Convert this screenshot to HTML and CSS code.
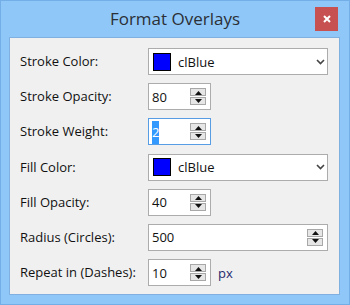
FILE: index.html
```html
<!DOCTYPE html>
<html lang="en">
<head>
    <meta charset="UTF-8">
    <title>Format Overlays</title>
    <link rel="stylesheet" href="styles.css">
</head>
<body>

    <div class="window">
        <div class="titlebar">
            <span></span>
            <h1 class="title">Format Overlays</h1>
            <button class="close">
                <svg width="8" height="8" viewBox="0 0 8 8"><path d="M1 1L7 7M7 1L1 7" stroke="#fff" stroke-width="2"/></svg>
            </button>
        </div>

        <div class="client">
            <div class="form">
                <label>Stroke Color:</label>
                <div class="combo">
                    <span class="swatch"></span>
                    <span class="value">clBlue</span>
                    <svg class="chevron" width="9" height="6" viewBox="0 0 9 6"><path d="M1 1L4.5 4.5L8 1" fill="none" stroke="#444" stroke-width="1.6"/></svg>
                </div>

                <label>Stroke Opacity:</label>
                <div class="spin-row">
                    <div class="spin small">
                        <span class="value">80</span>
                        <div class="updown">
                            <span class="btn"><svg width="9" height="5" viewBox="0 0 9 5"><path d="M1 5L4.5 1L8 5Z" fill="#111"/></svg></span>
                            <span class="btn"><svg width="9" height="5" viewBox="0 0 9 5"><path d="M1 0L4.5 4L8 0Z" fill="#111"/></svg></span>
                        </div>
                    </div>
                </div>

                <label>Stroke Weight:</label>
                <div class="spin-row">
                    <div class="spin small focused">
                        <span class="value"><span class="selected">2</span></span>
                        <div class="updown">
                            <span class="btn"><svg width="9" height="5" viewBox="0 0 9 5"><path d="M1 5L4.5 1L8 5Z" fill="#111"/></svg></span>
                            <span class="btn"><svg width="9" height="5" viewBox="0 0 9 5"><path d="M1 0L4.5 4L8 0Z" fill="#111"/></svg></span>
                        </div>
                    </div>
                </div>

                <label>Fill Color:</label>
                <div class="combo">
                    <span class="swatch"></span>
                    <span class="value">clBlue</span>
                    <svg class="chevron" width="9" height="6" viewBox="0 0 9 6"><path d="M1 1L4.5 4.5L8 1" fill="none" stroke="#444" stroke-width="1.6"/></svg>
                </div>

                <label>Fill Opacity:</label>
                <div class="spin-row">
                    <div class="spin small">
                        <span class="value">40</span>
                        <div class="updown">
                            <span class="btn"><svg width="9" height="5" viewBox="0 0 9 5"><path d="M1 5L4.5 1L8 5Z" fill="#111"/></svg></span>
                            <span class="btn"><svg width="9" height="5" viewBox="0 0 9 5"><path d="M1 0L4.5 4L8 0Z" fill="#111"/></svg></span>
                        </div>
                    </div>
                </div>

                <label>Radius (Circles):</label>
                <div class="spin-row">
                    <div class="spin wide">
                        <span class="value">500</span>
                        <div class="updown">
                            <span class="btn"><svg width="9" height="5" viewBox="0 0 9 5"><path d="M1 5L4.5 1L8 5Z" fill="#111"/></svg></span>
                            <span class="btn"><svg width="9" height="5" viewBox="0 0 9 5"><path d="M1 0L4.5 4L8 0Z" fill="#111"/></svg></span>
                        </div>
                    </div>
                </div>

                <label>Repeat in (Dashes):</label>
                <div class="spin-row">
                    <div class="spin small">
                        <span class="value">10</span>
                        <div class="updown">
                            <span class="btn"><svg width="9" height="5" viewBox="0 0 9 5"><path d="M1 5L4.5 1L8 5Z" fill="#111"/></svg></span>
                            <span class="btn"><svg width="9" height="5" viewBox="0 0 9 5"><path d="M1 0L4.5 4L8 0Z" fill="#111"/></svg></span>
                        </div>
                    </div>
                    <span class="unit">px</span>
                </div>
            </div>
        </div>
    </div>

</body>
</html>
```

FILE: styles.css
```css
* { margin: 0; padding: 0; box-sizing: border-box; }
body {
    font-family: "Open Sans", "Noto Sans", sans-serif;
    background: #8fc8f8;
    width: 350px;
    height: 305px;
    overflow: hidden;
}
.window {
    width: 350px;
    height: 305px;
    border: 1px solid #74aee6;
    background: #8fc8f8;
}
.titlebar {
    height: 36px;
    display: grid;
    grid-template-columns: 1fr auto 1fr;
    align-items: start;
}
.title {
    font-size: 17px;
    font-weight: normal;
    color: #2b2f36;
    line-height: 20px;
    margin-top: 8px;
}
.close {
    justify-self: end;
    width: 23px;
    height: 24px;
    margin-top: 6px;
    margin-right: 11px;
    background: #c75050;
    border: none;
    display: flex;
    align-items: center;
    justify-content: center;
}
.client {
    margin-left: 8px;
    width: 331px;
    height: 258px;
    background: #f0f0f0;
    border: 1px solid #7fb0df;
    padding: 10px 0 0 10px;
}
.form {
    display: grid;
    grid-template-columns: 128px auto;
    grid-auto-rows: 27px;
    row-gap: 8.2px;
    align-items: center;
    font-size: 13px;
    color: #111;
}
label { line-height: 27px; }
.combo {
    width: 180px;
    height: 27px;
    background: #fff;
    border: 1px solid #acacac;
    display: flex;
    align-items: center;
    padding-left: 4px;
    padding-right: 2px;
}
.swatch {
    width: 18px;
    height: 18px;
    background: #0000ff;
    border: 1px solid #000;
    margin-right: 7px;
}
.combo .value { flex: 1; }
.spin-row {
    display: flex;
    align-items: center;
    height: 27px;
}
.spin {
    height: 27px;
    background: #fff;
    border: 1px solid #acacac;
    display: flex;
    align-items: center;
    padding-left: 3px;
    padding-right: 4px;
}
.spin.small { width: 63px; }
.spin.wide { width: 180px; }
.spin.focused { border-color: #569de5; }
.spin .value { flex: 1; }
.selected {
    background: #3399ff;
    color: #fff;
    padding: 2px 0 3px;
}
.updown {
    display: flex;
    flex-direction: column;
    gap: 1px;
}
.btn {
    width: 16px;
    height: 8px;
    background: #e6e6e6;
    border: 1px solid #a8a8a8;
    display: flex;
    align-items: center;
    justify-content: center;
}
.btn svg { display: block; }
.unit {
    margin-left: 7px;
    color: #1f2a6e;
}
```
